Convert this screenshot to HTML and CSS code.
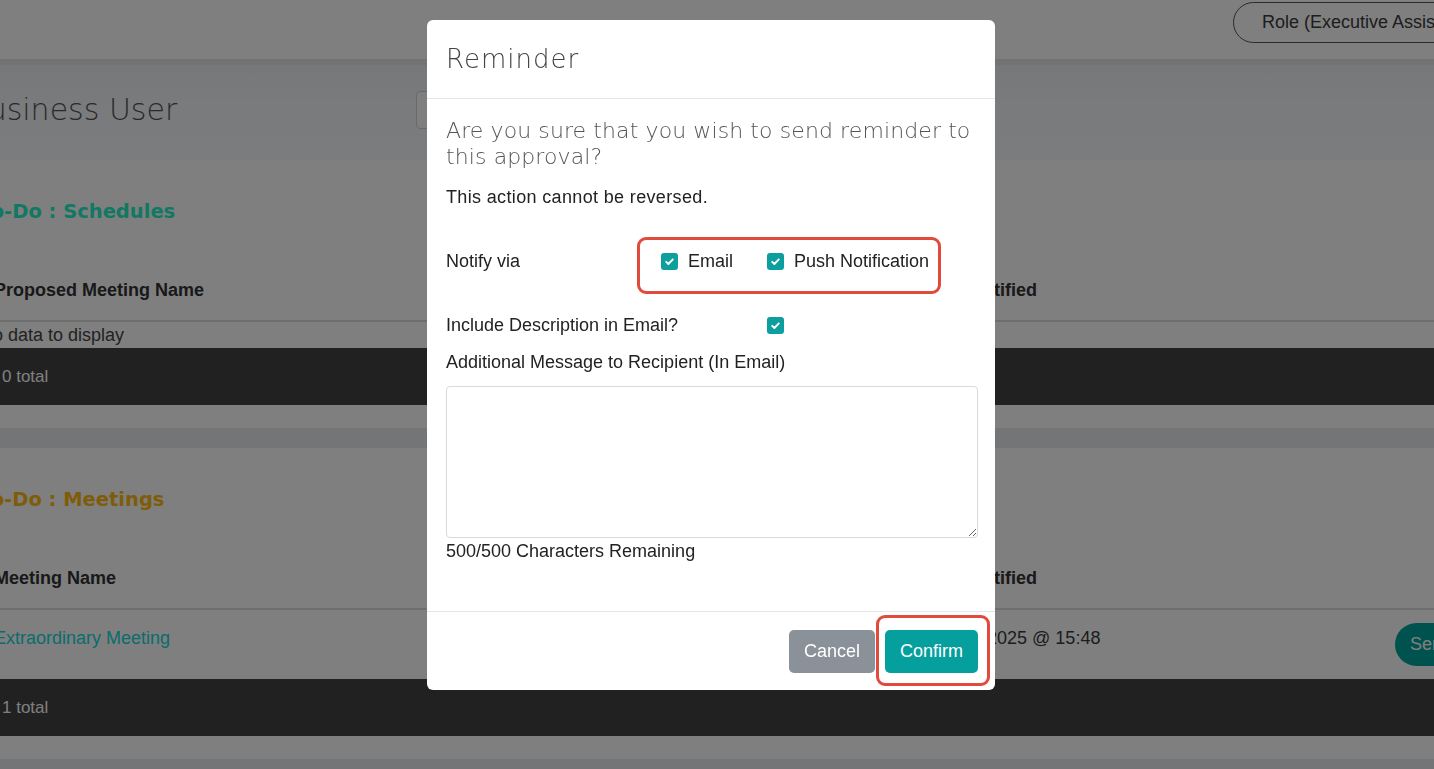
FILE: index.html
```html
<!DOCTYPE html>
<html lang="en">
<head>
<meta charset="utf-8">
<title>Reminder</title>
<link rel="stylesheet" href="styles.css">
</head>
<body>
<div class="page">
  <header class="topbar">
    <button class="role-pill" type="button">Role (Executive Assistant)</button>
  </header>
  <section class="hero">
    <h1 class="hero-title">Business User</h1>
    <div class="hero-search"></div>
  </section>
  <main class="content">
    <section class="card">
      <h2 class="card-title title-teal">To-Do : Schedules</h2>
      <div class="table">
        <div class="thead">
          <div class="th">Proposed Meeting Name</div>
          <div class="th">Last Notified</div>
          <div class="th"></div>
        </div>
        <div class="empty">No data to display</div>
        <div class="tfoot">0 total</div>
      </div>
    </section>
    <section class="card">
      <h2 class="card-title title-gold">To-Do : Meetings</h2>
      <div class="table">
        <div class="thead">
          <div class="th">Meeting Name</div>
          <div class="th">Last Notified</div>
          <div class="th"></div>
        </div>
        <div class="trow">
          <div class="td"><a class="link" href="#">Extraordinary Meeting</a></div>
          <div class="td">12 Jan 2025 @ 15:48</div>
          <div class="td td-action"><button class="send-btn" type="button">Send Reminder</button></div>
        </div>
        <div class="tfoot">1 total</div>
      </div>
    </section>
    <section class="card card-tail"></section>
  </main>
</div>

<div class="backdrop">
  <div class="modal">
    <div class="modal-header">
      <h3 class="modal-title">Reminder</h3>
    </div>
    <div class="modal-body">
      <p class="question">Are you sure that you wish to send reminder to this approval?</p>
      <p class="note">This action cannot be reversed.</p>
      <div class="notify-row">
        <span class="notify-label">Notify via</span>
        <div class="options">
          <label class="check">
            <span class="box"><svg viewBox="0 0 17 17" width="17" height="17"><polyline points="5.2,8.8 7.4,11 11.8,6.4" fill="none" stroke="#fff" stroke-width="1.9" stroke-linecap="round" stroke-linejoin="round"/></svg></span>
            <span>Email</span>
          </label>
          <label class="check">
            <span class="box"><svg viewBox="0 0 17 17" width="17" height="17"><polyline points="5.2,8.8 7.4,11 11.8,6.4" fill="none" stroke="#fff" stroke-width="1.9" stroke-linecap="round" stroke-linejoin="round"/></svg></span>
            <span>Push Notification</span>
          </label>
        </div>
      </div>
      <div class="include-row">
        <span class="include-label">Include Description in Email?</span>
        <span class="box"><svg viewBox="0 0 17 17" width="17" height="17"><polyline points="5.2,8.8 7.4,11 11.8,6.4" fill="none" stroke="#fff" stroke-width="1.9" stroke-linecap="round" stroke-linejoin="round"/></svg></span>
      </div>
      <div class="msg-label">Additional Message to Recipient (In Email)</div>
      <textarea class="msg-input" aria-label="Additional Message"></textarea>
      <div class="counter">500/500 Characters Remaining</div>
    </div>
    <div class="modal-footer">
      <button class="btn btn-cancel" type="button">Cancel</button>
      <button class="btn btn-confirm" type="button">Confirm</button>
    </div>
  </div>
</div>
</body>
</html>
```

FILE: styles.css
```css
* { box-sizing: border-box; }

html, body {
  margin: 0;
  height: 769px;
  overflow: hidden;
}

body {
  background: #e6eaee;
  font-family: "Liberation Sans", Arial, sans-serif;
  color: #333;
}

.page {
  margin-left: -20px;
  width: 1530px;
}

/* top bar */
.topbar {
  height: 59px;
  background: #fff;
  display: flex;
  justify-content: flex-end;
  align-items: flex-start;
  padding: 2px 11px 0 0;
}

.role-pill {
  height: 41px;
  padding: 0 27px 0 28px;
  border: 1px solid #555;
  border-radius: 21px;
  background: #fff;
  color: #3a3a3a;
  font-family: "Liberation Sans", Arial, sans-serif;
  font-size: 18px;
  white-space: nowrap;
}

/* hero */
.hero {
  height: 101px;
  background: linear-gradient(#e4e7eb 0, #e4e7eb 6px, #eef0f3 6px, #f4f6f9 45%, #f6f8fb 100%);
  display: flex;
  align-items: center;
}

.hero-title {
  margin: 0 0 0 -12px;
  width: 448px;
  font-family: "DejaVu Sans", sans-serif;
  font-weight: 200;
  font-size: 30px;
  line-height: 40px;
  color: #555;
}

.hero-search {
  width: 320px;
  height: 38px;
  margin-top: 1px;
  background: #fff;
  border: 1px solid #d0d4d8;
  border-radius: 4px;
}

/* cards */
.content {
  display: flex;
  flex-direction: column;
  gap: 20px;
}

.card {
  background: #fff;
  padding: 38px 0 23px;
}

.card-title {
  margin: 0 0 34px;
  font-family: "DejaVu Sans", sans-serif;
  font-weight: 700;
  font-size: 19.5px;
  line-height: 28px;
}

.title-teal { color: #22f0c6; }
.title-gold { color: #ffb810; }

.thead,
.trow {
  display: grid;
  grid-template-columns: 934px 481px 1fr;
}

.thead {
  border-bottom: 2px solid #dcdcdc;
}

.th {
  padding: 18px 0 18px 14px;
  font-weight: 700;
  font-size: 18px;
  line-height: 24px;
  color: #333;
}

.empty {
  font-size: 18px;
  line-height: 26px;
  color: #444;
}

.trow {
  min-height: 69px;
  align-items: start;
  font-size: 18px;
  line-height: 24px;
  color: #3a3a3a;
}

.td {
  padding: 16px 0 0 14px;
}

.td-action {
  align-self: center;
  padding: 0;
}

.link {
  color: #14d8d8;
  text-decoration: none;
}

.send-btn {
  height: 43px;
  padding: 0 16px 0 15px;
  border: none;
  border-radius: 22px;
  background: #00a49c;
  color: #fff;
  font-family: "Liberation Sans", Arial, sans-serif;
  font-size: 18px;
  white-space: nowrap;
}

.tfoot {
  height: 57px;
  line-height: 57px;
  padding-left: 22px;
  background: #424242;
  color: #fff;
  font-size: 17px;
}

.card-tail {
  height: 60px;
}

/* modal */
.backdrop {
  position: fixed;
  inset: 0;
  background: rgba(0, 0, 0, 0.5);
  display: flex;
  justify-content: center;
  align-items: flex-start;
  padding: 20px 12px 0 0;
}

.modal {
  width: 568px;
  background: #fff;
  border-radius: 6px;
}

.modal-header {
  height: 79px;
  padding: 0 19px;
  display: flex;
  align-items: center;
  border-bottom: 1px solid #e3e6e9;
}

.modal-title {
  margin: 0;
  font-family: "DejaVu Sans", sans-serif;
  font-weight: 200;
  font-size: 26px;
  letter-spacing: 1px;
  line-height: 30px;
  color: #444;
}

.modal-body {
  padding: 19px 17px 48px 19px;
  font-size: 18px;
  line-height: 24px;
  color: #222;
}

.question {
  margin: 0;
  font-family: "DejaVu Sans", sans-serif;
  font-weight: 200;
  font-size: 22px;
  line-height: 26px;
  letter-spacing: 0.1px;
  color: #555;
}

.note {
  margin: 15px 0 0;
  letter-spacing: 0.35px;
}

.notify-row {
  margin-top: 40px;
  display: flex;
  align-items: center;
}

.notify-label {
  width: 215px;
  flex: none;
}

.options {
  position: relative;
  display: flex;
  gap: 34px;
}

.options::after {
  content: "";
  position: absolute;
  top: -12px;
  bottom: -21px;
  left: -24px;
  right: -12px;
  border: 3px solid #e14b3b;
  border-radius: 9px;
}

.check {
  display: flex;
  align-items: center;
  gap: 10px;
}

.box {
  width: 17px;
  height: 17px;
  flex: none;
  border-radius: 3px;
  background: #0d9e9e;
  display: block;
}

.box svg {
  display: block;
}

.include-row {
  margin-top: 40px;
  display: flex;
  align-items: center;
}

.include-label {
  width: 321px;
  flex: none;
}

.msg-label {
  margin-top: 13px;
}

.msg-input {
  display: block;
  width: 100%;
  height: 152px;
  margin-top: 12px;
  border: 1px solid #d6dade;
  border-radius: 4px;
  background: #fff;
  font-family: "Liberation Sans", Arial, sans-serif;
  font-size: 18px;
}

.counter {
  margin-top: 1px;
}

.modal-footer {
  border-top: 1px solid #e3e6e9;
  padding: 18px 17px 17px;
  display: flex;
  justify-content: flex-end;
  gap: 10px;
}

.btn {
  height: 43px;
  padding: 0 15px;
  border: none;
  border-radius: 5px;
  color: #fff;
  font-family: "Liberation Sans", Arial, sans-serif;
  font-size: 18px;
}

.btn-cancel {
  background: #8a9198;
}

.btn-confirm {
  position: relative;
  background: #05a09e;
}

.btn-confirm::after {
  content: "";
  position: absolute;
  top: -15px;
  bottom: -13px;
  left: -9px;
  right: -12px;
  border: 3px solid #e14b3b;
  border-radius: 9px;
}
```
